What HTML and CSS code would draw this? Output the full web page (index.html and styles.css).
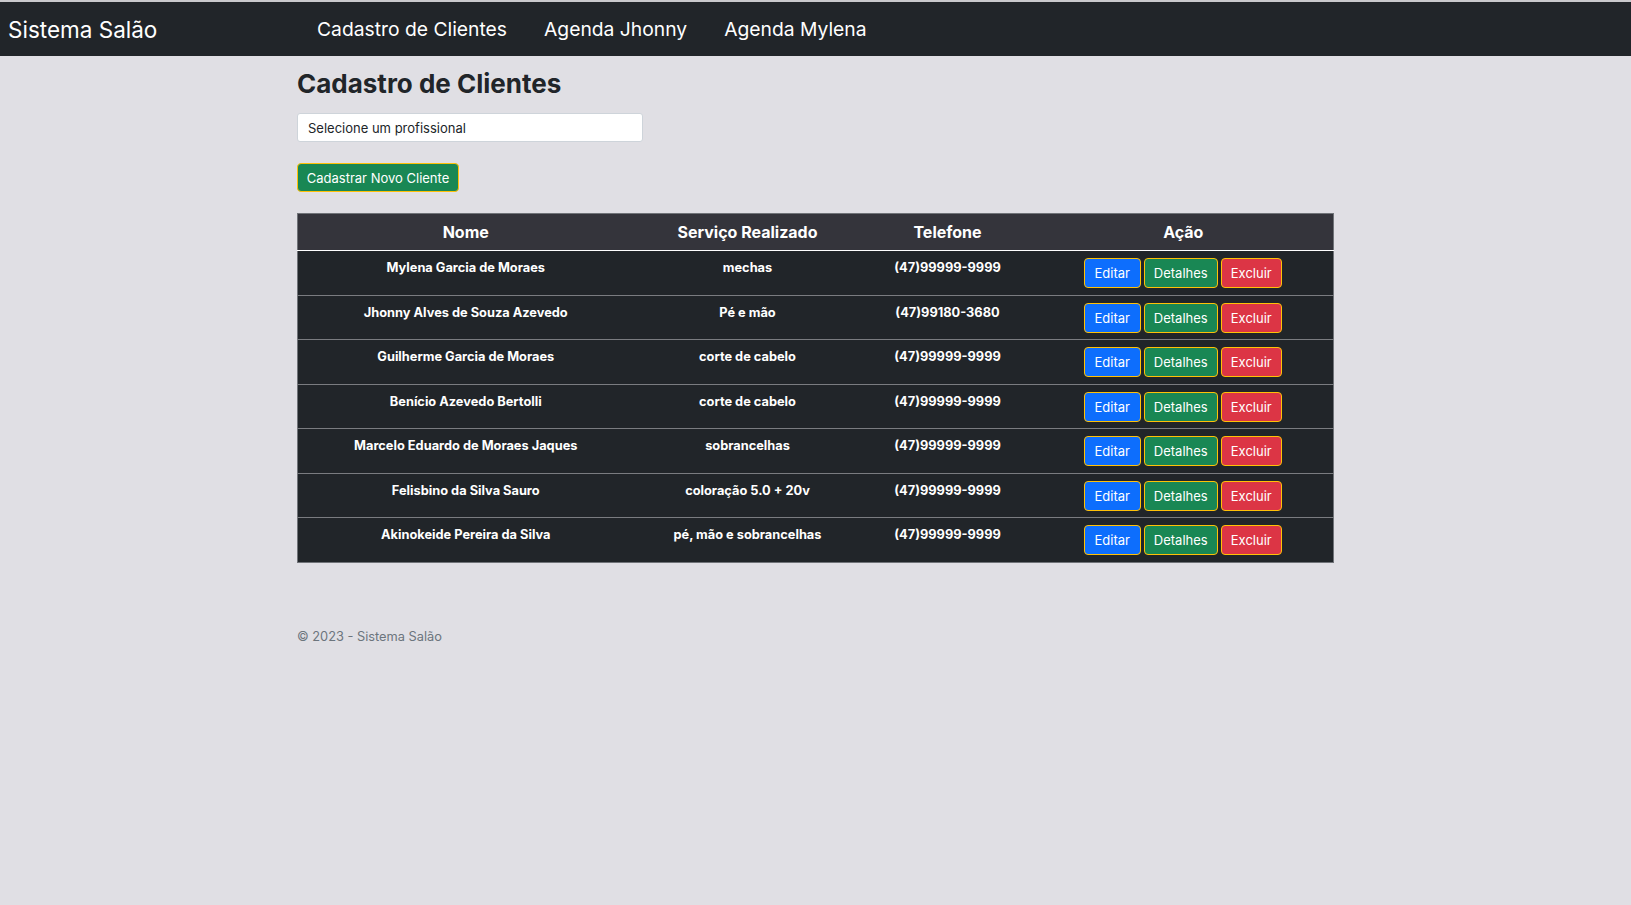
FILE: index.html
```html
<!DOCTYPE html>
<html lang="pt-br">
<head>
<meta charset="utf-8">
<title>Sistema Salão</title>
<link rel="stylesheet" href="styles.css">
</head>
<body>
<header class="navbar">
  <a class="brand" href="#">Sistema Salão</a>
  <nav class="nav">
    <a href="#">Cadastro de Clientes</a>
    <a href="#">Agenda Jhonny</a>
    <a href="#">Agenda Mylena</a>
  </nav>
</header>
<main class="container">
  <h1 class="title">Cadastro de Clientes</h1>
  <div class="select">Selecione um profissional</div>
  <button class="btn btn-green btn-new">Cadastrar Novo Cliente</button>
  <table class="table">
    <colgroup>
      <col class="c1"><col class="c2"><col class="c3"><col class="c4">
    </colgroup>
    <thead>
      <tr><th>Nome</th><th>Serviço Realizado</th><th>Telefone</th><th>Ação</th></tr>
    </thead>
    <tbody>
      <tr><td>Mylena Garcia de Moraes</td><td>mechas</td><td>(47)99999-9999</td><td class="acts"><button class="btn btn-blue">Editar</button><button class="btn btn-green">Detalhes</button><button class="btn btn-red">Excluir</button></td></tr>
      <tr><td>Jhonny Alves de Souza Azevedo</td><td>Pé e mão</td><td>(47)99180-3680</td><td class="acts"><button class="btn btn-blue">Editar</button><button class="btn btn-green">Detalhes</button><button class="btn btn-red">Excluir</button></td></tr>
      <tr><td>Guilherme Garcia de Moraes</td><td>corte de cabelo</td><td>(47)99999-9999</td><td class="acts"><button class="btn btn-blue">Editar</button><button class="btn btn-green">Detalhes</button><button class="btn btn-red">Excluir</button></td></tr>
      <tr><td>Benício Azevedo Bertolli</td><td>corte de cabelo</td><td>(47)99999-9999</td><td class="acts"><button class="btn btn-blue">Editar</button><button class="btn btn-green">Detalhes</button><button class="btn btn-red">Excluir</button></td></tr>
      <tr><td>Marcelo Eduardo de Moraes Jaques</td><td>sobrancelhas</td><td>(47)99999-9999</td><td class="acts"><button class="btn btn-blue">Editar</button><button class="btn btn-green">Detalhes</button><button class="btn btn-red">Excluir</button></td></tr>
      <tr><td>Felisbino da Silva Sauro</td><td>coloração 5.0 + 20v</td><td>(47)99999-9999</td><td class="acts"><button class="btn btn-blue">Editar</button><button class="btn btn-green">Detalhes</button><button class="btn btn-red">Excluir</button></td></tr>
      <tr><td>Akinokeide Pereira da Silva</td><td>pé, mão e sobrancelhas</td><td>(47)99999-9999</td><td class="acts"><button class="btn btn-blue">Editar</button><button class="btn btn-green">Detalhes</button><button class="btn btn-red">Excluir</button></td></tr>
    </tbody>
  </table>
</main>
<footer class="footer">© 2023 - Sistema Salão</footer>
</body>
</html>
```
FILE: styles.css
```css
* { box-sizing: border-box; }
html, body { margin: 0; padding: 0; }
body {
  background: #e0dfe4;
  font-family: Inter, "Noto Sans", sans-serif;
  color: #212529;
}
.navbar {
  border-top: 2px solid #c9c9cc;
  background: #212529;
  height: 56px;
  display: flex;
  align-items: center;
}
.brand {
  color: #fff;
  text-decoration: none;
  font-size: 22.5px;
  padding-left: 8px;
  width: 317px;
}
.nav { display: flex; gap: 37px; }
.nav a {
  color: #fff;
  text-decoration: none;
  font-size: 19.3px;
}
.container {
  width: 1037px;
  margin: 0 auto;
}
.title {
  font-size: 26px;
  font-weight: 700;
  line-height: 34px;
  margin: 11px 0 12px;
}
.select {
  width: 346px;
  height: 29px;
  background: #fff;
  border: 1px solid #ced4da;
  border-radius: 3px;
  font-size: 13px;
  padding: 0 10px;
  display: flex;
  align-items: center;
}
.btn {
  font-family: inherit;
  color: #fff;
  border: 1px solid #ffc107;
  border-radius: 4px;
  font-size: 13px;
  height: 30px;
  padding: 0 10px;
  cursor: pointer;
}
.btn-green { background: #198754; }
.btn-blue { background: #0d6efd; }
.btn-red { background: #dc3545; }
.btn-new {
  display: block;
  margin-top: 21px;
  width: 162px;
  height: 29px;
  padding: 0;
}
.table {
  margin-top: 21px;
  width: 1036px;
  table-layout: fixed;
  border-collapse: collapse;
  border: 1px solid #707378;
  color: #fff;
}
.c1 { width: 336px; }
.c2 { width: 228px; }
.c3 { width: 172px; }
.c4 { width: 300px; }
.table th {
  background: #34343b;
  height: 37px;
  font-size: 16px;
  font-weight: 700;
  border-bottom: 1px solid #fff;
  padding: 0;
}
.table td {
  background: #212529;
  height: 44.5px;
  font-size: 12.8px;
  font-weight: 700;
  text-align: center;
  vertical-align: top;
  padding: 9px 0 0;
  border-top: 1px solid #7a7c80;
}
.table td.acts {
  padding-top: 7px;
  padding-right: 1px;
}
.acts .btn { margin: 0 1.5px; }
.acts .btn-blue { width: 57px; padding: 0; }
.acts .btn-green { width: 74px; padding: 0; }
.acts .btn-red { width: 61px; padding: 0; }
.footer {
  width: 1037px;
  margin: 66px auto 0;
  font-size: 12.8px;
  color: #6c757d;
}
```
